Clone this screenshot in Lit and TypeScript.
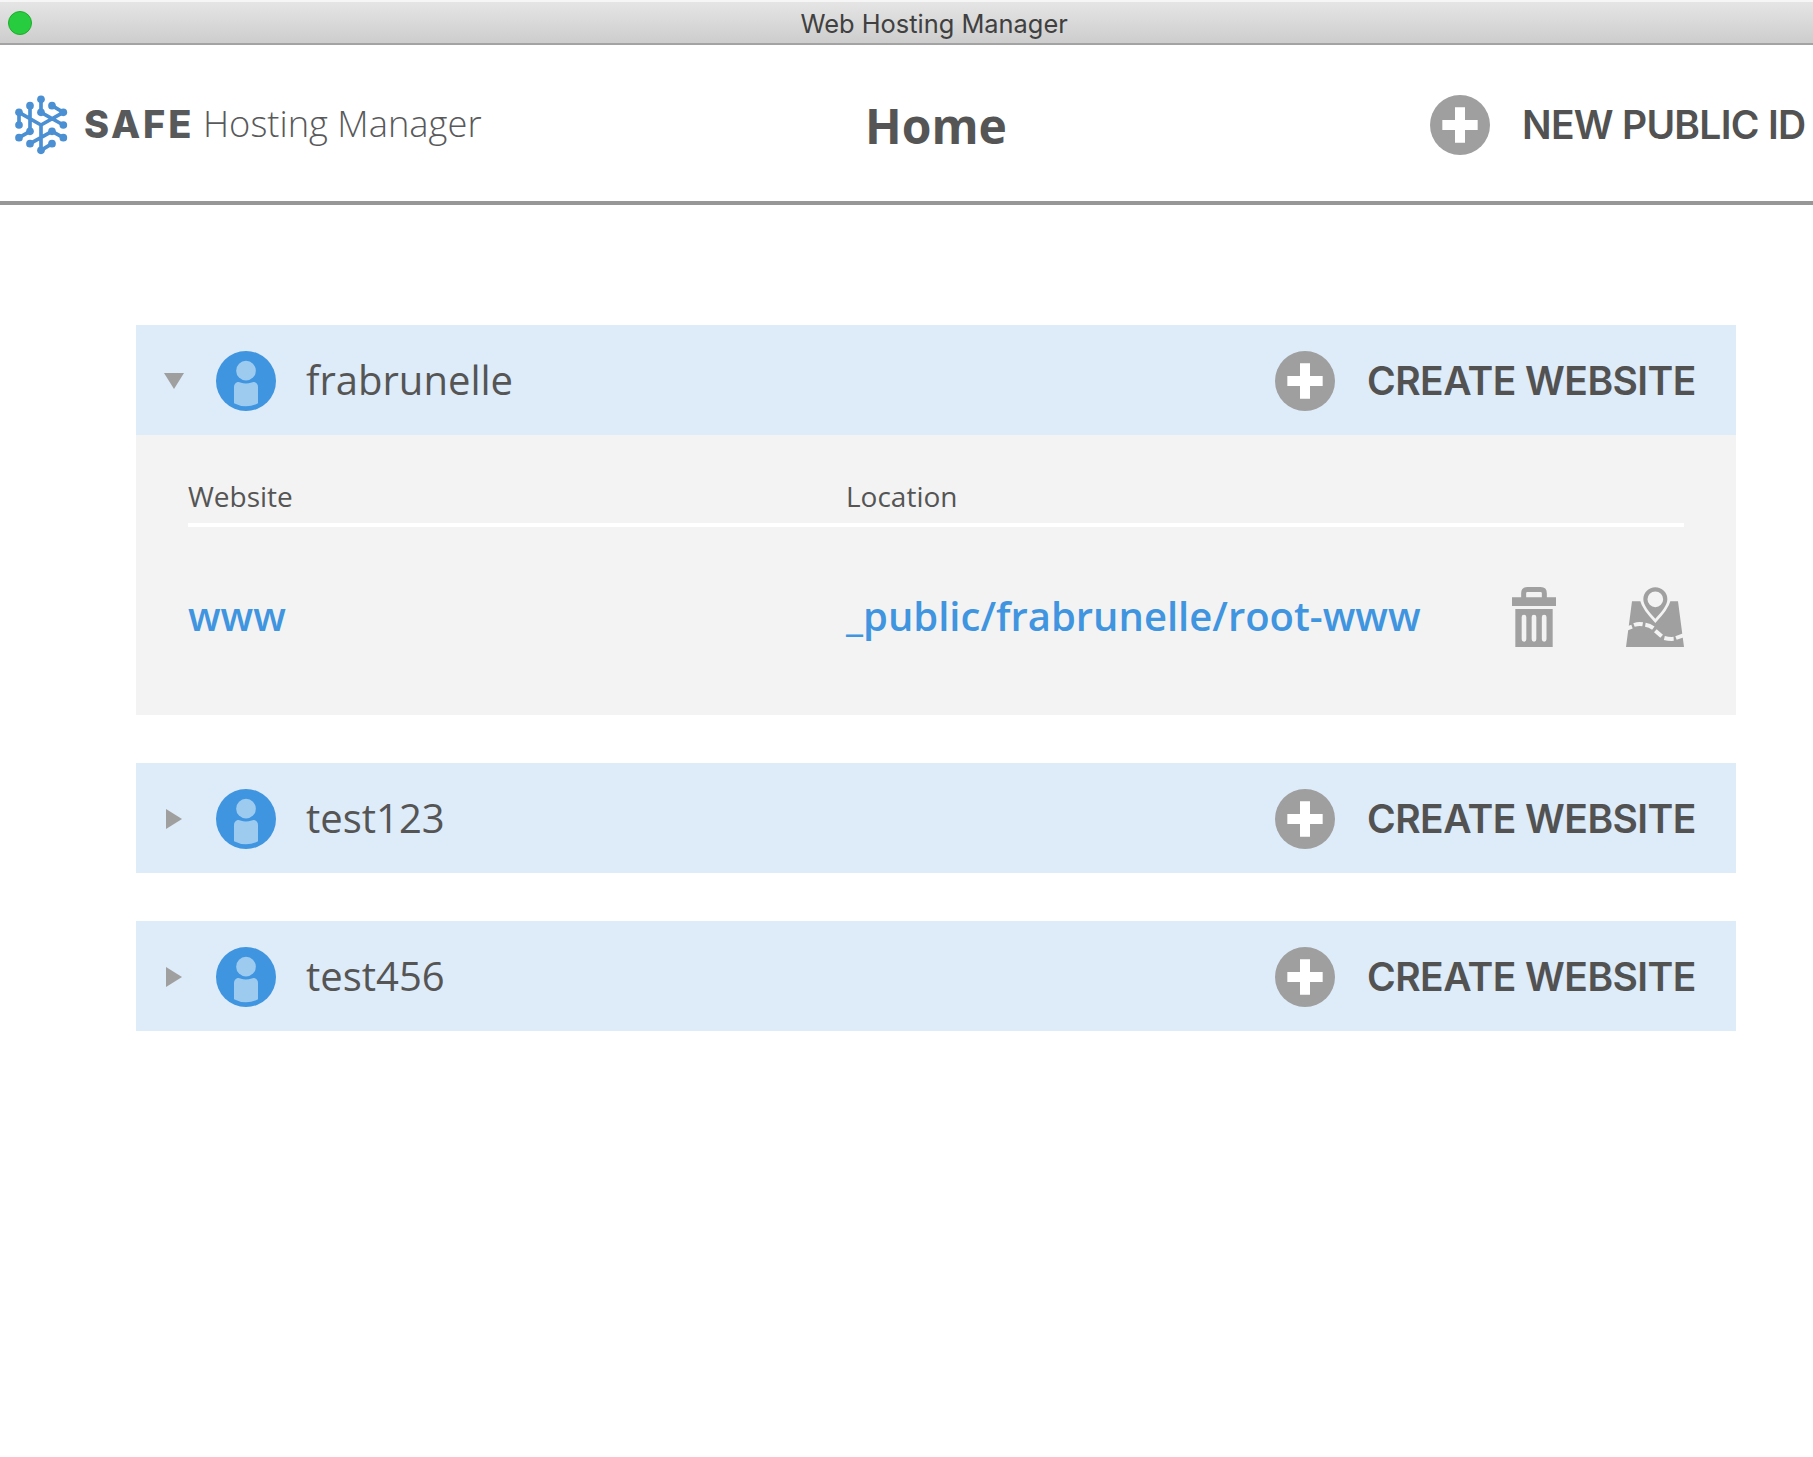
import { LitElement, html, css, svg } from "lit";
import { customElement, property, state } from "lit/decorators.js";

interface Site {
  name: string;
  location: string;
}

interface PublicId {
  name: string;
  open: boolean;
  sites: Site[];
}

const plusIcon = html`
  <svg width="60" height="60" viewBox="0 0 180 180" aria-hidden="true">
    <circle cx="90" cy="90" r="90" fill="#9f9f9f" />
    <path d="M75 37h30v38h38v30h-38v38H75v-38H37V75h38z" fill="#fff" />
  </svg>
`;

const avatarIcon = html`
  <svg width="60" height="60" viewBox="0 0 180 180" aria-hidden="true">
    <circle cx="90" cy="90" r="90" fill="#3f95df" />
    <circle cx="90" cy="59" r="29.5" fill="#9dcbf0" />
    <path
      d="M54 108Q54 97 65 93Q69 92 73 94.500Q90 101 107 94.500Q111 92 115 93Q126 97 126 108V157Q109 166 90 166Q71 166 54 157Z"
      fill="#9dcbf0"
    />
  </svg>
`;

const trashIcon = html`
  <svg width="44" height="60" viewBox="0 0 132 180" aria-hidden="true">
    <path d="M35 33V19Q35 7.500 46 7.500H86Q97 7.500 97 19V33" fill="none" stroke="#a0a0a0" stroke-width="15" />
    <path d="M0 31H132V57H0ZM10 66H122V180H10Z" fill="#a0a0a0" />
    <path d="M36 90V157M66 90V157M96.500 90V157" stroke="#f3f3f3" stroke-width="14" stroke-linecap="round" />
  </svg>
`;

const mapIcon = html`
  <svg width="58" height="60" viewBox="0 0 174 180" aria-hidden="true">
    <path d="M18 43H43Q48 66 88 108Q128 66 133 43H156L174 180H0Z" fill="#a0a0a0" />
    <path
      d="M4 124L18 119M24 114Q37 109 50 111.500M58 113Q71 115 82 123.500M88 131L107 148M115 153Q129 156.500 143 155.500M150 153L174 144"
      fill="none"
      stroke="#f3f3f3"
      stroke-width="12"
    />
    <path
      fill-rule="evenodd"
      d="M88 1A36 36 0 0 1 124 37C124 54 108 74 88 95C68 74 52 54 52 37A36 36 0 0 1 88 1ZM88 13.500A23.500 23.500 0 1 0 88 60.500A23.500 23.500 0 1 0 88 13.500Z"
      fill="#a0a0a0"
    />
  </svg>
`;

const logoNodes = [
  [123, 58], [90, 77], [156, 77], [57, 97], [123, 97], [190, 97], [57, 135], [190, 135],
  [57, 173], [90, 154], [190, 173], [90, 191], [156, 191], [123, 211], [156, 154],
];

const logoMark = html`
  <svg class="mark" width="54" height="60" viewBox="42 45 162 180" aria-hidden="true">
    <path
      d="M123 58V97L190 135M156 77L190 97L123 135L57 97V135M90 77V154L57 173M123 135V211L156 191M90 191L156 154L190 173"
      fill="none"
      stroke="#4a90d2"
      stroke-width="11"
      stroke-linejoin="round"
    />
    ${logoNodes.map(([x, y]) => svg`<circle cx=${x} cy=${y} r="11.5" fill="#4a90d2" />`)}
  </svg>
`;

@customElement("action-button")
export class ActionButton extends LitElement {
  @property() label = "";

  static styles = css`
    :host {
      display: block;
    }
    .button {
      display: flex;
      align-items: flex-start;
      gap: 32px;
      padding: 0;
      border: 0;
      background: none;
      color: #525252;
      font: 600 39px/47px Inter, "Liberation Sans", sans-serif;
      letter-spacing: var(--action-spacing, -0.55px);
      white-space: nowrap;
    }
    .label {
      width: var(--action-width, 329px);
      margin-top: 6px;
      text-align: left;
    }
    svg {
      display: block;
      flex: none;
    }
  `;

  render() {
    return html`<button class="button">${plusIcon}<span class="label">${this.label}</span></button>`;
  }
}

@customElement("public-id-card")
export class PublicIdCard extends LitElement {
  @property({ attribute: false }) entry!: PublicId;

  static styles = css`
    :host {
      display: block;
    }
    svg {
      display: block;
      flex: none;
    }
    .head {
      display: flex;
      align-items: flex-start;
      box-sizing: border-box;
      height: 110px;
      padding: 26px 40px 24px 28px;
      background: #deebf8;
    }
    .chevron {
      margin: 20px 32px 0 0;
    }
    .name {
      margin: 1px auto 0 30px;
      color: #555;
      font-size: 40px;
      line-height: 55px;
    }
    .body {
      padding: 42px 52px 68px;
      background: #f3f3f3;
    }
    .columns,
    .row {
      display: grid;
      grid-template-columns: 658px 1fr;
    }
    .columns {
      padding-bottom: 8px;
      border-bottom: 4px solid #fff;
      color: #555;
      font-size: 28px;
      line-height: 38px;
    }
    .row {
      grid-template-columns: 658px 1fr auto;
      align-items: start;
      margin-top: 60px;
    }
    .link {
      margin-top: 1px;
      color: #3f95df;
      font-size: 40px;
      font-weight: 600;
      line-height: 55px;
      text-decoration: none;
    }
    .tools {
      display: flex;
      gap: 70px;
    }
  `;

  render() {
    const { name, open, sites } = this.entry;
    return html`
      <div class="head">
        <svg class="chevron" width="20" height="20" viewBox="0 0 20 20" aria-hidden="true">
          <path d=${open ? "M0 2H20L10 18Z" : "M2 0L18 10L2 20Z"} fill="#9f9f9f" />
        </svg>
        ${avatarIcon}
        <span class="name">${name}</span>
        <action-button label="CREATE WEBSITE"></action-button>
      </div>
      ${open
        ? html`<div class="body">
            <div class="columns"><span>Website</span><span>Location</span></div>
            ${sites.map(
              (site) => html`<div class="row">
                <a class="link">${site.name}</a>
                <a class="link">${site.location}</a>
                <div class="tools">${trashIcon}${mapIcon}</div>
              </div>`
            )}
          </div>`
        : null}
    `;
  }
}

@customElement("app-root")
export class AppRoot extends LitElement {
  @state() private ids: PublicId[] = [
    { name: "frabrunelle", open: true, sites: [{ name: "www", location: "_public/frabrunelle/root-www" }] },
    { name: "test123", open: false, sites: [] },
    { name: "test456", open: false, sites: [] },
  ];

  static styles = css`
    :host {
      display: block;
      min-height: 100vh;
      background: #fff;
      font-family: "Open Sans", "Noto Sans", sans-serif;
    }
    .titlebar {
      display: flex;
      align-items: flex-start;
      box-sizing: border-box;
      height: 45px;
      padding: 8px 8px 0;
      border-bottom: 2px solid #a3a3a3;
      background: linear-gradient(#f6f6f6 0 2px, #e5e5e5 2px, #cdcdcd);
      background-clip: padding-box;
    }
    .dot {
      box-sizing: border-box;
      width: 24px;
      height: 24px;
      margin-top: 3px;
      border: 1px solid #1dad2b;
      border-radius: 50%;
      background: #28cc3f;
    }
    .window-title {
      margin-left: 768.5px;
      color: #404040;
      font: 400 25.4px/31px Inter, "Liberation Sans", sans-serif;
    }
    .header {
      display: flex;
      align-items: flex-start;
      box-sizing: border-box;
      height: 160px;
      padding: 50px 8px 0 14px;
      border-bottom: 4px solid #979797;
    }
    .brand {
      display: flex;
      align-items: flex-start;
      width: 851px;
      color: #58595b;
      white-space: nowrap;
    }
    .mark {
      display: block;
    }
    .safe {
      width: 119px;
      margin: 6px 0 0 16px;
      font: 800 38px/46px Inter, "Liberation Sans", sans-serif;
      letter-spacing: 2.8px;
    }
    .product {
      margin-top: 3px;
      font-size: 36.3px;
      font-weight: 300;
      line-height: 50px;
    }
    .page-title {
      margin: -2px auto 0 0;
      color: #555;
      font-size: 48px;
      font-weight: 700;
      line-height: 65px;
    }
    .new-id {
      --action-spacing: -0.72px;
      --action-width: 283px;
    }
    .list {
      display: flex;
      flex-direction: column;
      gap: 48px;
      padding: 120px 77px 0 136px;
    }
  `;

  render() {
    return html`
      <div class="titlebar">
        <span class="dot"></span>
        <span class="window-title">Web Hosting Manager</span>
      </div>
      <header class="header">
        <div class="brand">
          ${logoMark}
          <span class="safe">SAFE</span>
          <span class="product">Hosting Manager</span>
        </div>
        <h1 class="page-title">Home</h1>
        <action-button class="new-id" label="NEW PUBLIC ID"></action-button>
      </header>
      <main class="list">
        ${this.ids.map((entry) => html`<public-id-card .entry=${entry}></public-id-card>`)}
      </main>
    `;
  }
}
